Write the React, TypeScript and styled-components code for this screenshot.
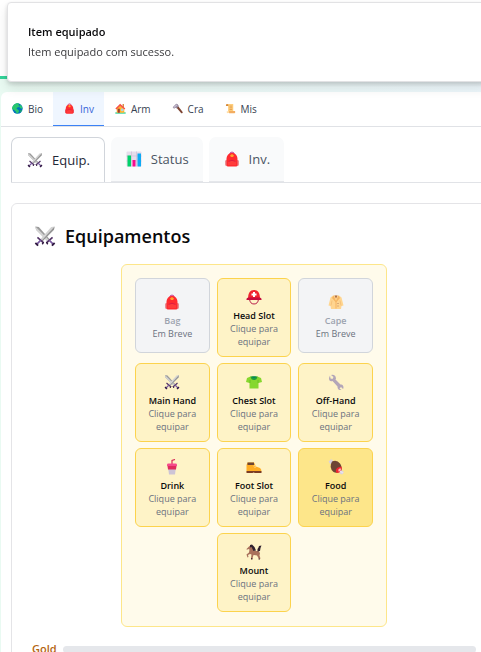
import React from "react";
import styled, { createGlobalStyle, css } from "styled-components";

const GlobalStyle = createGlobalStyle`
  *, *::before, *::after { box-sizing: border-box; }
  body {
    margin: 0;
    overflow: hidden;
    font-family: "Open Sans", "Noto Sans", sans-serif;
    color: #09090b;
    background: linear-gradient(90deg, #e9faf2, #eff6ff 140%);
  }
  button { font-family: inherit; margin: 0; cursor: pointer; }
  h1, h2, p { margin: 0; }
`;

/* ---------- icons ---------- */

type IconName =
  | "globe" | "bag" | "house" | "hammer" | "scroll" | "swords" | "chart"
  | "helmet" | "coat" | "shirt" | "wrench" | "cup" | "boot" | "meat" | "horse";

const drawings: Record<IconName, React.ReactNode> = {
  globe: (
    <>
      <circle cx="16" cy="16" r="15" fill="#0074ba" />
      <path d="M5 6C9 1 16 0 21 2l-3 4 4 2-3 4-4 1-2 4 4 2 4 4-3 5-4 3-3-6-5-5-7-3C1 12 2 9 5 6z" fill="#28c76f" />
      <path d="M24 5l5 5 1 5-3 2-4-3-2-4z" fill="#28c76f" />
      <path d="M25 20l4 0-3 6-3 1z" fill="#1db15f" />
    </>
  ),
  bag: (
    <>
      <path d="M12 6V4q4-4 8 0v2" fill="none" stroke="#c63a8c" strokeWidth="2" />
      <path d="M5 17C5 9 9 4 16 4s11 5 11 13v11a3 3 0 0 1-3 3H8a3 3 0 0 1-3-3z" fill="#ff2b30" />
      <path d="M3 20q0-2 2-2v12q-2 0-2-3zM29 20q0-2-2-2v12q2 0 2-3z" fill="#e3242c" />
      <path d="M9 20h14l1 2v6H8v-6z" fill="#ff3b3b" />
      <path d="M9 21q7-5 14 0" fill="none" stroke="#c9144a" strokeWidth="1.3" />
      <path d="M12 9l4-3 4 3-2 3h-4z" fill="#ffa32e" />
    </>
  ),
  house: (
    <>
      <path d="M1 27h30v4H1z" fill="#44d7a0" />
      <path d="M22 3h4v9h-4z" fill="#d3883e" />
      <path d="M5 14L15 5l12 10v13H5z" fill="#ffb02e" />
      <path d="M1 16L15 2l15 14-3 3L15 8 4 19z" fill="#f8504b" />
      <path d="M8 17h6v11H8z" fill="#9b3d35" />
      <path d="M18 17h6v6h-6z" fill="#83cbff" stroke="#fff0bd" strokeWidth="1" />
    </>
  ),
  hammer: (
    <>
      <path d="M12 12l5-4 14 18q1 5-4 4z" fill="#7d4533" />
      <path d="M2 12L12 2l4 1 4 6-7 7-3-2-4 3z" fill="#998ea4" />
      <path d="M4 12l9-8 3 2-9 8z" fill="#cdc4d6" />
    </>
  ),
  scroll: (
    <>
      <path d="M7 3h17v25H9V9H4q-4-5 3-6z" fill="#ffce7c" />
      <path d="M6 3q4 0 4 6H3q-2-5 3-6z" fill="#d3883e" />
      <path d="M12 23h17q3 7-4 7H12z" fill="#f3ad61" />
      <path d="M12 24q0 6-4 6t-3-6z" fill="#ffdea7" />
      <path d="M13 9h8M13 14h8M13 19h8" stroke="#d3883e" strokeWidth="1.8" />
    </>
  ),
  swords: (
    <>
      <path d="M2 2l5 1 16 18-3 3L3 7z" fill="#9b9b9b" />
      <path d="M2 2l20 20-2 2L3 7z" fill="#d3d3d3" />
      <path d="M30 2l-5 1L9 21l3 3L29 7z" fill="#d3d3d3" />
      <path d="M30 2L11 23l1 1L29 7z" fill="#929292" />
      <path d="M18 26l9-8M14 26l-9-8" stroke="#533566" strokeWidth="2.4" />
      <path d="M22 22l7 7M10 22l-7 7" stroke="#7858a0" strokeWidth="2.4" />
      <path d="M26 30l4-4M6 30l-4-4" stroke="#321b41" strokeWidth="2.6" />
      <path d="M18 25l2 3M14 25l-2 3" stroke="#321b41" strokeWidth="2" />
    </>
  ),
  chart: (
    <>
      <rect x="1" y="1" width="30" height="30" rx="2" fill="#e6ddeb" />
      <path d="M1 10h30M1 20h30M11 1v30M21 1v30" stroke="#cdbfd8" strokeWidth="1.4" />
      <path d="M3 9h7v22H3z" fill="#00d26a" />
      <path d="M13 18h6v13h-6z" fill="#f70a8d" />
      <path d="M23 5h7v26h-7z" fill="#0daaf4" />
    </>
  ),
  helmet: (
    <>
      <path d="M7 20q1 10 9 10t9-10" fill="none" stroke="#b81d4b" strokeWidth="2" />
      <path d="M4 20C4 8 8 2 16 2s12 6 12 18z" fill="#f0252f" />
      <path d="M1 20q0-3 4-3h22q4 0 4 3v2H1z" fill="#c60d3d" />
      <path d="M14 6h4v3h3v4h-3v3h-4v-3h-3V9h3z" fill="#fff" />
    </>
  ),
  coat: (
    <>
      <path d="M10 3h12l5 4 4 16-4 1-1 6H6l-1-6-4-1L5 7z" fill="#ffd590" />
      <path d="M11 3l5 11 5-11 3 5-7 8v13h-2V16L8 8z" fill="#f5b462" />
      <path d="M13 3h6l-3 6z" fill="#a96a48" />
      <path d="M8 13l-2 10M24 13l2 10" stroke="#efb469" strokeWidth="1.2" />
      <path d="M19 19h2M19 24h2" stroke="#a56953" strokeWidth="1.6" />
    </>
  ),
  shirt: (
    <>
      <path d="M9 5h14l7 3 2 8-7 2v11H7V18l-7-2 2-8z" fill="#86d72f" />
      <path d="M9 5h14q-1 7-7 7T9 5z" fill="#1f9d3c" />
      <path d="M12 5h8q-1 3-4 3t-4-3z" fill="#008463" />
      <path d="M8 12v6M24 12v6" stroke="#5fb821" strokeWidth="1.3" />
    </>
  ),
  wrench: (
    <>
      <path d="M2 8l2-5 1 6 4 1 2-4-5-4q9-2 10 7l-1 2 10 10q6-1 6 7l-1 2-4-4-3 3 4 3q-8 1-8-7L9 14Q2 16 2 8z" fill="#b3a6b8" />
    </>
  ),
  cup: (
    <>
      <path d="M16 11V3l6-2" fill="none" stroke="#d82755" strokeWidth="2.4" />
      <path d="M8 16h16l-2 15H10z" fill="#cdc4d6" />
      <path d="M6 11q0-2 3-2h14q3 0 3 2v3H6z" fill="#f5498b" />
      <path d="M7 14h18l-1 7H8z" fill="#e02a5c" />
    </>
  ),
  boot: (
    <>
      <path d="M3 7h13l4 8 8 3q3 2 3 7H1V12z" fill="#ffad24" />
      <path d="M3 7h13v5H3z" fill="#6d4534" />
      <path d="M1 24h30v4H18l-3-1-2 1H1z" fill="#7b3c24" />
      <path d="M15 14l4-1M17 17l4-2" stroke="#ffe6a1" strokeWidth="1.7" />
    </>
  ),
  meat: (
    <>
      <path d="M1 4l3-1 2-3 4 3v6l-6 1zM23 25l4-3 4 3v3l-3 3-5-2z" fill="#d9d2df" />
      <path d="M8 5q10-4 16 4 5 7 2 15-8 6-15 2Q1 17 8 5z" fill="#6d4534" />
      <path d="M27 15q3 12-10 13-4-8 3-11z" fill="#f0252f" />
      <path d="M26 19q0 6-5 6-2-4 2-6z" fill="#ffb9b9" />
      <path d="M24 24l6 4" stroke="#eae4ee" strokeWidth="3" />
    </>
  ),
  horse: (
    <>
      <path d="M1 10l5-5 4-3 3 4 4 8h8l3 4-1 5 2 6-3 1-4-7-7-1-2 7h-3l1-8-3-1-4 2 1 4-2 1-2-6 5-4 1-6-3-1-2 2z" fill="#a9705b" />
      <path d="M8 2l4-1 5 5 3 7-5 1-4-8-3 1z" fill="#30222f" />
      <path d="M23 15q-1-6 2-8l1-3 5-1-2 5-1 6z" fill="#30222f" />
      <path d="M10 28h3v3h-3zM25 29h3v2h-3z" fill="#4b2b32" />
    </>
  ),
};

const Svg = styled.svg<{ $size: number }>`
  display: block;
  flex: none;
  width: ${(p) => p.$size}px;
  height: ${(p) => p.$size}px;
`;

function Icon({ name, size }: { name: IconName; size: number }) {
  return (
    <Svg $size={size} viewBox="0 0 32 32" aria-hidden="true">
      {drawings[name]}
    </Svg>
  );
}

/* ---------- page ---------- */

const Header = styled.header`
  height: 79px;
  background: #fff;
  border-bottom: 3px solid #34d399;
`;

const Toast = styled.div`
  position: fixed;
  z-index: 10;
  top: 2px;
  left: 7px;
  right: -7px;
  padding: 20px;
  border: 1px solid #e2e2e4;
  border-radius: 4px;
  background: #fff;
  box-shadow: 0 6px 12px rgba(0, 0, 0, 0.1), 0 2px 4px rgba(0, 0, 0, 0.14);
  font-size: 11px;
  line-height: 18px;
`;

const ToastTitle = styled.p`
  font-weight: 600;
`;

const ToastText = styled.p`
  margin-top: 2px;
  color: #3a3a3d;
`;

const Panel = styled.main`
  margin: 13px -26px 0 1px;
  min-height: calc(100vh - 92px);
  border-radius: 6px 6px 0 0;
  background: #fff;
  overflow: hidden;
`;

const MainTabs = styled.nav`
  display: flex;
  border-bottom: 1px solid #e0e2e6;
  height: 35px;
`;

const MainTab = styled.button<{ $active?: boolean }>`
  display: flex;
  align-items: center;
  gap: 5px;
  padding: 0 10px 0 11px;
  border: 0;
  border-bottom: 1px solid ${(p) => (p.$active ? "#3b82f6" : "transparent")};
  background: ${(p) => (p.$active ? "#eff6ff" : "transparent")};
  color: ${(p) => (p.$active ? "#3563d9" : "#374151")};
  font-size: 10px;
  font-weight: 500;
`;

const SubTabs = styled.nav`
  display: flex;
  gap: 6px;
  height: 46px;
  margin: 10px 10px 0;
  border-bottom: 1px solid #e1e3e7;
`;

const SubTab = styled.button<{ $active?: boolean }>`
  display: flex;
  align-items: center;
  gap: 9px;
  padding: 0 14px 0 15px;
  border: 0;
  border-radius: 7px 7px 0 0;
  background: #f9fafb;
  border-bottom: 1px solid #e5e7eb;
  color: #4b5563;
  font-size: 13px;
  font-weight: 500;
  ${(p) =>
    p.$active &&
    css`
      border: 1px solid #d1d5db;
      border-bottom: 0;
      background: #fff;
      color: #1f2937;
    `}
`;

const Card = styled.section`
  margin: 20px 10px 0;
  padding: 20px;
  border: 1px solid #e4e4e7;
  border-radius: 6px;
`;

const CardTitle = styled.h1`
  display: flex;
  align-items: center;
  gap: 9px;
  height: 24px;
  padding-left: 2px;
  font-size: 18px;
  font-weight: 600;
  line-height: 24px;
`;

const Board = styled.div`
  display: grid;
  grid-template-columns: repeat(3, 1fr);
  grid-auto-rows: minmax(79px, auto);
  gap: 6px 7px;
  width: 266px;
  margin: 16px auto 0;
  padding: 13px 13px 14px;
  border: 1px solid #fde68a;
  border-radius: 6px;
  background: #fffbeb;
`;

const Slot = styled.button<{ $column?: number; $highlight?: boolean }>`
  display: flex;
  flex-direction: column;
  align-items: center;
  justify-content: center;
  ${(p) => p.$column && `grid-column: ${p.$column};`}
  padding: 2px 8px 0;
  border: 1px solid #fcd34d;
  border-radius: 6px;
  background: ${(p) => (p.$highlight ? "#fde68a" : "#fef3c7")};
  color: #09090b;
  font-size: 9px;
  line-height: 13px;

  &:disabled {
    align-self: start;
    height: 75px;
    border-color: #d1d5db;
    background: #f3f4f6;
    color: #9ca3af;
    cursor: default;
  }
`;

const SlotName = styled.span`
  margin-top: 4px;
  font-weight: 600;
`;

const SlotHint = styled.span`
  color: #6b7280;
`;

const GoldRow = styled.div`
  display: flex;
  align-items: center;
  gap: 6px;
  margin-top: 13px;
`;

const GoldLabel = styled.span`
  color: #b46412;
  font-size: 11px;
  font-weight: 600;
  line-height: 18px;
`;

const GoldTrack = styled.div`
  flex: 1;
  height: 7px;
  border-radius: 4px;
  background: #e5e7eb;
`;

const mainTabs: { icon: IconName; label: string }[] = [
  { icon: "globe", label: "Bio" },
  { icon: "bag", label: "Inv" },
  { icon: "house", label: "Arm" },
  { icon: "hammer", label: "Cra" },
  { icon: "scroll", label: "Mis" },
];

const subTabs: { icon: IconName; label: string }[] = [
  { icon: "swords", label: "Equip." },
  { icon: "chart", label: "Status" },
  { icon: "bag", label: "Inv." },
];

const slots: { icon: IconName; name: string; soon?: boolean; column?: number; highlight?: boolean }[] = [
  { icon: "bag", name: "Bag", soon: true },
  { icon: "helmet", name: "Head Slot" },
  { icon: "coat", name: "Cape", soon: true },
  { icon: "swords", name: "Main Hand" },
  { icon: "shirt", name: "Chest Slot" },
  { icon: "wrench", name: "Off-Hand" },
  { icon: "cup", name: "Drink" },
  { icon: "boot", name: "Foot Slot" },
  { icon: "meat", name: "Food", highlight: true },
  { icon: "horse", name: "Mount", column: 2 },
];

export default function App() {
  return (
    <>
      <GlobalStyle />
      <Header />
      <Toast role="status">
        <ToastTitle>Item equipado</ToastTitle>
        <ToastText>Item equipado com sucesso.</ToastText>
      </Toast>
      <Panel>
        <MainTabs>
          {mainTabs.map((t) => (
            <MainTab key={t.label} $active={t.label === "Inv"}>
              <Icon name={t.icon} size={11} />
              {t.label}
            </MainTab>
          ))}
        </MainTabs>
        <SubTabs>
          {subTabs.map((t) => (
            <SubTab key={t.label} $active={t.label === "Equip."}>
              <Icon name={t.icon} size={16} />
              {t.label}
            </SubTab>
          ))}
        </SubTabs>
        <Card>
          <CardTitle>
            <Icon name="swords" size={22} />
            Equipamentos
          </CardTitle>
          <Board>
            {slots.map((s) => (
              <Slot key={s.name} disabled={s.soon} $column={s.column} $highlight={s.highlight}>
                <Icon name={s.icon} size={16} />
                <SlotName>{s.name}</SlotName>
                <SlotHint>{s.soon ? "Em Breve" : "Clique para equipar"}</SlotHint>
              </Slot>
            ))}
          </Board>
          <GoldRow>
            <GoldLabel>Gold</GoldLabel>
            <GoldTrack />
          </GoldRow>
        </Card>
      </Panel>
    </>
  );
}
